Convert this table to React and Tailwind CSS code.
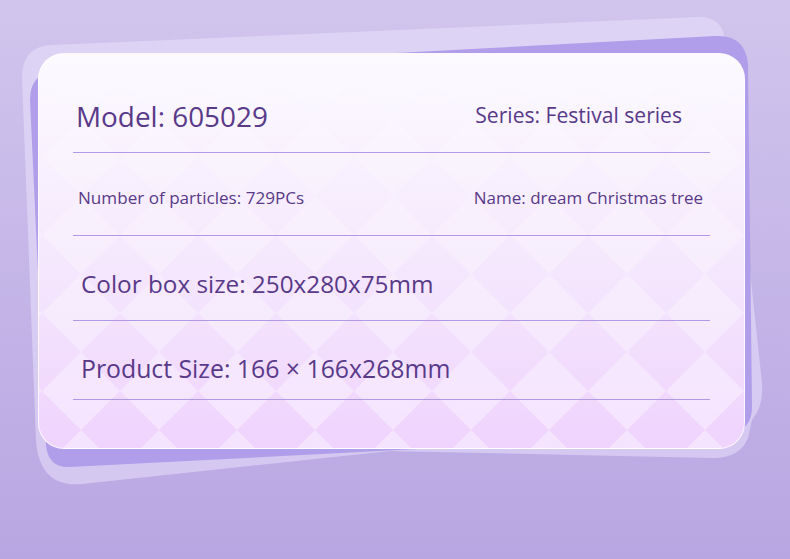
export default function App() {
  return (
    <div className="relative flex items-start w-[790px] h-[559px] overflow-hidden bg-linear-to-b from-[#d1c5ed] to-[#b8a6e2] font-['Open_Sans',sans-serif]">
      <svg className="absolute inset-0" width="790" height="559" viewBox="0 0 790 559">
        <defs>
          <linearGradient id="lightg" x1="0" y1="0" x2="0" y2="1">
            <stop offset="0" stopColor="#ddd4f5" />
            <stop offset="1" stopColor="#d4c8f1" />
          </linearGradient>
        </defs>
        <path
          d="M 22 78 Q 22 46 52 45 L 698 17 Q 722 16 725 40 L 762 383 Q 764 405 752 420 L 748 438 Q 740 458 713 458 L 390 451 L 82 484 C 52 487 38 470 36 440 Z"
          fill="url(#lightg)"
        />
        <path
          d="M 30 100 Q 30 72 58 71 L 715 36 Q 745 34 748 64 L 752 405 Q 753 430 730 433 L 70 467 Q 48 468 46 445 Z"
          fill="#b19eea"
        />
      </svg>

      <div className="relative z-10 ml-[38px] mt-[53px] w-[707px] h-[396px] rounded-[26px] border border-white/80 overflow-hidden bg-linear-to-b from-[#fcfaff] via-[#f5e9fd] to-[#efd3fd]">
        <svg className="absolute inset-0" width="705" height="394">
          <defs>
            <linearGradient id="fade" x1="0" y1="0" x2="0" y2="1">
              <stop offset="0" stopColor="#ffffff" stopOpacity="0.12" />
              <stop offset="1" stopColor="#ffffff" stopOpacity="0.38" />
            </linearGradient>
            <pattern id="dia" x="3" y="64" width="78" height="78" patternUnits="userSpaceOnUse">
              <polygon points="39,0 78,39 39,78 0,39" fill="#ffffff" />
            </pattern>
            <mask id="fm">
              <rect width="705" height="394" fill="url(#fade)" />
            </mask>
          </defs>
          <rect width="705" height="394" fill="url(#dia)" mask="url(#fm)" />
        </svg>

        <div className="relative flex flex-col px-[34px] text-[#593a89]">
          <div className="flex justify-between items-start h-[99px] border-b border-[#b09ae6]">
            <div className="mt-[49px] pl-[3px] text-[27.9px] leading-none">Model: 605029</div>
            <div className="mt-[50px] pr-[28px] text-[21.1px] leading-none">Series: Festival series</div>
          </div>
          <div className="flex justify-between items-start h-[83px] border-b border-[#b09ae6]">
            <div className="mt-[36px] pl-[5px] text-[17.1px] leading-none">Number of particles: 729PCs</div>
            <div className="mt-[36px] pr-[7px] text-[17px] leading-none">Name: dream Christmas tree</div>
          </div>
          <div className="flex items-start h-[85px] border-b border-[#b09ae6]">
            <div className="mt-[36px] pl-[8px] text-[24.3px] leading-none">Color box size: 250x280x75mm</div>
          </div>
          <div className="flex items-start h-[79px] border-b border-[#b09ae6]">
            <div className="mt-[35px] pl-[8px] text-[24.8px] leading-none">Product Size: 166 × 166x268mm</div>
          </div>
        </div>
      </div>
    </div>
  );
}
